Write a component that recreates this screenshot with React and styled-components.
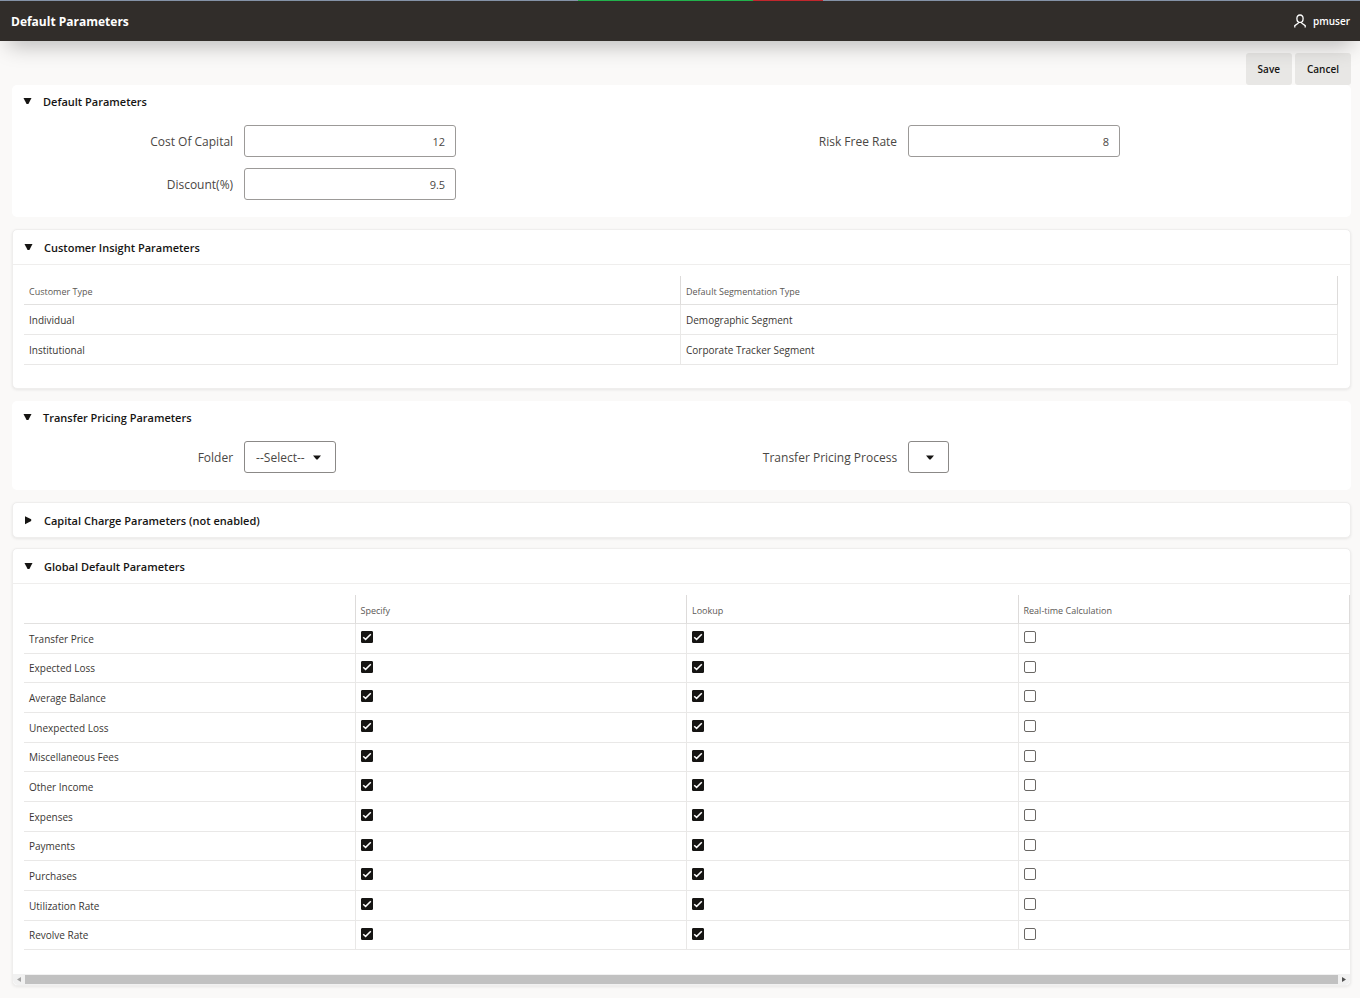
import React, { useState } from 'react';
import styled, { createGlobalStyle, css } from 'styled-components';

const insightRows = [
    ['Individual', 'Demographic Segment'],
    ['Institutional', 'Corporate Tracker Segment'],
];

const globalColumns = ['Specify', 'Lookup', 'Real-time Calculation'];

const globalRows = [
    'Transfer Price',
    'Expected Loss',
    'Average Balance',
    'Unexpected Loss',
    'Miscellaneous Fees',
    'Other Income',
    'Expenses',
    'Payments',
    'Purchases',
    'Utilization Rate',
    'Revolve Rate',
];

function Section({ title, flat, defaultOpen = true, children }) {
    const [open, setOpen] = useState(defaultOpen);
    return (
        <Card $flat={flat}>
            <CardHeading>
                <CardToggle type="button" $flat={flat} aria-expanded={open} onClick={() => setOpen(!open)}>
                    <svg width="9" height="9" viewBox="0 0 9 9" aria-hidden="true">
                        <path d={open ? 'M0.5 1H8.5L5.4 7H3.6Z' : 'M1 0.2V8.2L7.2 5.1V3.3Z'} fill="#161513" />
                    </svg>
                    {title}
                </CardToggle>
            </CardHeading>
            {open && children}
        </Card>
    );
}

function NumberField({ id, label, value }) {
    return (
        <Field>
            <label htmlFor={id}>{label}</label>
            <TextInput id={id} type="text" inputMode="decimal" defaultValue={value} />
        </Field>
    );
}

function SelectField({ id, label, option, width }) {
    return (
        <Field>
            <label htmlFor={id}>{label}</label>
            <SelectWrap $width={width}>
                <select id={id}>
                    <option>{option}</option>
                </select>
                <svg width="8" height="5" viewBox="0 0 8 5" aria-hidden="true">
                    <path d="M0 0.5H8L4.6 4.5H3.4Z" fill="#161513" />
                </svg>
            </SelectWrap>
        </Field>
    );
}

function Check({ label, defaultChecked }) {
    return (
        <CheckWrap>
            <input type="checkbox" aria-label={label} defaultChecked={defaultChecked} />
            <svg width="12" height="12" viewBox="0 0 12 12" aria-hidden="true">
                <path d="M2.2 6.3L4.6 8.4L9.8 3.2" fill="none" stroke="#fff" strokeWidth="1.5" />
            </svg>
        </CheckWrap>
    );
}

function App() {
    return (
        <Page>
            <GlobalStyle />
            <LoadStrip>
                <span />
                <span />
            </LoadStrip>
            <TopBar>
                <h1>Default Parameters</h1>
                <User href="#user">
                    <svg width="12" height="14" viewBox="0 0 12 14" aria-hidden="true">
                        <path
                            d="M6 1C4 1 2.9 2.4 2.9 4.4C2.9 6.8 4.3 8.4 6 8.4S9.1 6.8 9.1 4.4C9.1 2.4 8 1 6 1ZM4.4 8L4.2 9.2L0.8 11.6V13.4M7.6 8L7.8 9.2L11.2 11.6V13.4"
                            fill="none"
                            stroke="#fff"
                            strokeWidth="1.3"
                        />
                    </svg>
                    pmuser
                </User>
            </TopBar>
            <Actions>
                <Button type="button">Save</Button>
                <Button type="button">Cancel</Button>
            </Actions>
            <main>
                <Section title="Default Parameters" flat>
                    <Form>
                        <NumberField id="cost" label="Cost Of Capital" value="12" />
                        <NumberField id="risk" label="Risk Free Rate" value="8" />
                        <NumberField id="discount" label="Discount(%)" value="9.5" />
                    </Form>
                </Section>
                <Section title="Customer Insight Parameters">
                    <TableArea>
                        <Table>
                            <thead>
                                <tr>
                                    <th>Customer Type</th>
                                    <th>Default Segmentation Type</th>
                                </tr>
                            </thead>
                            <tbody>
                                {insightRows.map(([type, segment]) => (
                                    <tr key={type}>
                                        <td>{type}</td>
                                        <td>{segment}</td>
                                    </tr>
                                ))}
                            </tbody>
                        </Table>
                    </TableArea>
                </Section>
                <Section title="Transfer Pricing Parameters" flat>
                    <Form>
                        <SelectField id="folder" label="Folder" option="--Select--" width={92} />
                        <SelectField id="process" label="Transfer Pricing Process" option="" width={41} />
                    </Form>
                </Section>
                <Section title="Capital Charge Parameters (not enabled)" defaultOpen={false} />
                <Section title="Global Default Parameters">
                    <TableArea $scroll>
                        <Table $dense>
                            <thead>
                                <tr>
                                    <td />
                                    {globalColumns.map((name) => (
                                        <th key={name}>{name}</th>
                                    ))}
                                </tr>
                            </thead>
                            <tbody>
                                {globalRows.map((row) => (
                                    <tr key={row}>
                                        <td>{row}</td>
                                        {globalColumns.map((name, i) => (
                                            <td key={name}>
                                                <Check label={`${row} ${name}`} defaultChecked={i < 2} />
                                            </td>
                                        ))}
                                    </tr>
                                ))}
                            </tbody>
                        </Table>
                    </TableArea>
                    <ScrollBar>
                        <svg width="4" height="5" viewBox="0 0 4 5" aria-hidden="true">
                            <path d="M4 0V5L0 2.5Z" fill="#a3a3a3" />
                        </svg>
                        <span />
                        <svg width="4" height="5" viewBox="0 0 4 5" aria-hidden="true">
                            <path d="M0 0V5L4 2.5Z" fill="#505050" />
                        </svg>
                    </ScrollBar>
                </Section>
            </main>
        </Page>
    );
}

const GlobalStyle = createGlobalStyle`
    *{
        box-sizing: border-box;
    }
    body{
        margin: 0;
        background-color: #faf9f8;
        font-family: "Open Sans", "Noto Sans", sans-serif;
        font-size: 12px;
        color: #161513;
    }
    h1, h2{
        margin: 0;
    }
    button, input, select{
        font-family: inherit;
    }
`;

const Page = styled.div`
    padding-bottom: 11px;
    main{
        padding: 0 9px 0 12px;
    }
`;

const LoadStrip = styled.div`
    display: flex;
    height: 1px;
    padding-left: 42.5%;
    background-color: #8593a8;
    span{
        width: 175px;
        background-color: #22b14c;
    }
    span + span{
        width: 70px;
        background-color: #c1272d;
    }
`;

const TopBar = styled.header`
    display: flex;
    align-items: center;
    justify-content: space-between;
    height: 40px;
    padding: 0 10px 0 11px;
    background-color: #312d2a;
    color: #fff;
    box-shadow: 0 12px 22px -8px rgba(0, 0, 0, 0.28);
    h1{
        font-size: 12px;
        font-weight: 700;
    }
`;

const User = styled.a`
    display: flex;
    align-items: center;
    gap: 7px;
    color: inherit;
    font-size: 10px;
    font-weight: 600;
    text-decoration: none;
`;

const Actions = styled.div`
    display: flex;
    justify-content: flex-end;
    gap: 3px;
    padding: 12px 9px 0;
`;

const Button = styled.button`
    height: 32px;
    padding: 0 12px 1px;
    border: 0;
    border-radius: 3px;
    background-color: rgba(22, 21, 19, 0.08);
    color: #161513;
    font-size: 10px;
    font-weight: 600;
    cursor: pointer;
`;

const Card = styled.section`
    margin-bottom: 12px;
    border-radius: 5px;
    background-color: #fff;
    ${({ $flat }) => !$flat && css`
        border: 1px solid #efeeed;
        box-shadow: 0 1px 3px rgba(0, 0, 0, 0.08);
    `}
    &:nth-child(4){
        margin-bottom: 10px;
    }
    &:last-child{
        margin-bottom: 0;
    }
`;

const CardHeading = styled.h2`
    font-size: 11px;
`;

const CardToggle = styled.button`
    display: flex;
    align-items: center;
    gap: 11px;
    width: 100%;
    height: ${({ $flat }) => ($flat ? '33px' : '34px')};
    padding: 0 11px;
    border: 0;
    background: none;
    color: #161513;
    font-size: 11px;
    font-weight: 600;
    text-align: left;
    cursor: pointer;
`;

const Form = styled.div`
    display: grid;
    grid-template-columns: 1fr 1fr;
    row-gap: 11px;
    padding: 7px 11px 17px 0;
`;

const Field = styled.div`
    display: flex;
    align-items: center;
    gap: 11px;
    label{
        width: 33.3%;
        color: #4a4744;
        font-weight: 400;
        text-align: right;
    }
`;

const TextInput = styled.input`
    width: 212px;
    height: 32px;
    padding: 0 10px;
    border: 1px solid #9c9a98;
    border-radius: 3px;
    background-color: #fff;
    color: #4a4744;
    font-size: 11px;
    text-align: right;
`;

const SelectWrap = styled.div`
    position: relative;
    width: ${({ $width }) => $width}px;
    height: 32px;
    select{
        appearance: none;
        width: 100%;
        height: 100%;
        padding: 0 11px;
        border: 1px solid #8b8987;
        border-radius: 3px;
        background-color: #fff;
        color: #4a4744;
        font-size: 12px;
    }
    svg{
        position: absolute;
        top: 14px;
        right: 15px;
        pointer-events: none;
    }
`;

const TableArea = styled.div`
    padding: 11px ${({ $scroll }) => ($scroll ? '0 24px' : '12px 23px')} 11px;
    border-top: 1px solid #efeeed;
`;

const Table = styled.table`
    width: 100%;
    table-layout: fixed;
    border-collapse: separate;
    border-spacing: 0;
    th, td{
        height: 30px;
        padding: 0 5px;
        border-right: 1px solid #e9e8e7;
        border-bottom: 1px solid #e9e8e7;
        color: #3a3633;
        font-size: 10px;
        font-weight: 400;
        line-height: 14px;
        text-align: left;
    }
    th{
        padding-top: 4px;
        color: #5b5855;
        font-size: 9px;
    }
    thead tr > *{
        height: 29px;
        border-right-color: #dddbda;
        border-bottom-color: #e2e1e0;
    }
    ${({ $dense }) => $dense && css`
        tbody tr:nth-child(3n + 2) td{
            height: 29px;
        }
    `}
`;

const CheckWrap = styled.span`
    display: grid;
    width: 12px;
    height: 12px;
    margin-bottom: 3px;
    input, svg{
        grid-area: 1 / 1;
        margin: 0;
    }
    input{
        appearance: none;
        width: 12px;
        height: 12px;
        border: 1px solid #6b6865;
        border-radius: 2px;
        background-color: #fff;
    }
    input:checked{
        border-color: #161513;
        border-radius: 1px;
        background-color: #161513;
    }
    svg{
        z-index: 1;
        pointer-events: none;
    }
`;

const ScrollBar = styled.div`
    display: flex;
    align-items: center;
    gap: 4px;
    height: 11px;
    padding: 0 4px;
    border-radius: 0 0 5px 5px;
    background-color: #f1f1f1;
    span{
        flex: 1;
        height: 9px;
        background-color: #c1c1c1;
    }
`;

export default App;
